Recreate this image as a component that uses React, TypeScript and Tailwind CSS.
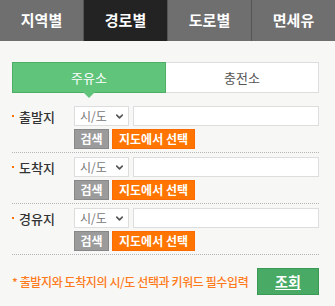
import { ChevronDown } from 'lucide-react';

const TABS = ['지역별', '경로별', '도로별', '면세유'];
const ROWS = ['출발지', '도착지', '경유지'];

const font = { fontFamily: '"Noto Sans CJK KR", "Noto Sans", sans-serif' };

function PlaceRow({ label }: { label: string }) {
  return (
    <div className="flex pt-[4px] pb-[3px] border-b border-dotted border-[#b5b5b5]">
      <div className="w-[62px] shrink-0 flex items-center h-[20px] gap-[5px]">
        <span className="w-[2px] h-[2px] bg-[#ff7200]" />
        <span className="text-[13px] text-[#333] leading-none font-medium">{label}</span>
      </div>
      <div className="flex-1 flex flex-col gap-[3px]">
        <div className="flex gap-[4px]">
          <div className="w-[55px] h-[20px] bg-white border border-[#ddd] flex items-center justify-between pl-[5px] pr-[3px]">
            <span className="text-[12px] text-[#777] leading-none">시/도</span>
            <ChevronDown className="w-[11px] h-[11px] text-[#555]" strokeWidth={3.5} />
          </div>
          <div className="w-[186px] h-[20px] bg-white border border-[#ddd]" />
        </div>
        <div className="flex gap-[3px]">
          <button className="h-[20px] w-[35px] bg-[#9b9b9b] border border-[#888] text-white text-[12px] font-bold leading-none">
            검색
          </button>
          <button className="h-[20px] w-[83px] bg-[#ff7500] border border-[#ff6a00] text-white text-[12px] font-bold leading-none">
            지도에서 선택
          </button>
        </div>
      </div>
    </div>
  );
}

export default function App() {
  return (
    <div className="w-[335px] h-[306px] bg-[#f7f7f5]" style={font}>
      {/* Top tabs */}
      <div className="flex h-[41px]">
        {TABS.map((t, i) => (
          <div
            key={t}
            className={`flex-1 flex items-center justify-center text-[15px] font-bold text-white ${
              i === 1 ? 'bg-[#232323]' : 'bg-[#6f6f6f]'
            } ${i > 0 ? 'border-l border-[#555]' : ''}`}
          >
            {t}
          </div>
        ))}
      </div>

      <div className="pl-[12px] pr-[16px] pt-[21px]">
        {/* Fuel type toggle */}
        <div className="flex h-[31px]">
          <div className="relative w-[154px] bg-[#60c47b] border border-[#4caf65] flex items-center justify-center text-[13px] text-white">
            주유소
            <span className="absolute left-1/2 -translate-x-1/2 top-full w-0 h-0 border-l-[6px] border-r-[6px] border-t-[6px] border-l-transparent border-r-transparent border-t-[#60c47b]" />
          </div>
          <div className="flex-1 bg-white border border-l-0 border-[#ddd] flex items-center justify-center text-[13px] text-[#555]">
            충전소
          </div>
        </div>

        <div className="mt-[9px]">
          {ROWS.map((r) => (
            <PlaceRow key={r} label={r} />
          ))}
        </div>

        <div className="flex items-center justify-between mt-[13px]">
          <span className="text-[12px] tracking-[-0.4px] whitespace-nowrap text-[#ff7a1a] font-medium">
            * 출발지와 도착지의 시/도 선택과 키워드 필수입력
          </span>
          <button className="w-[62px] h-[27px] shrink-0 bg-[#48aa64] border border-[#3a9a55] text-white text-[14px] font-bold underline underline-offset-2">
            조회
          </button>
        </div>
      </div>
    </div>
  );
}
